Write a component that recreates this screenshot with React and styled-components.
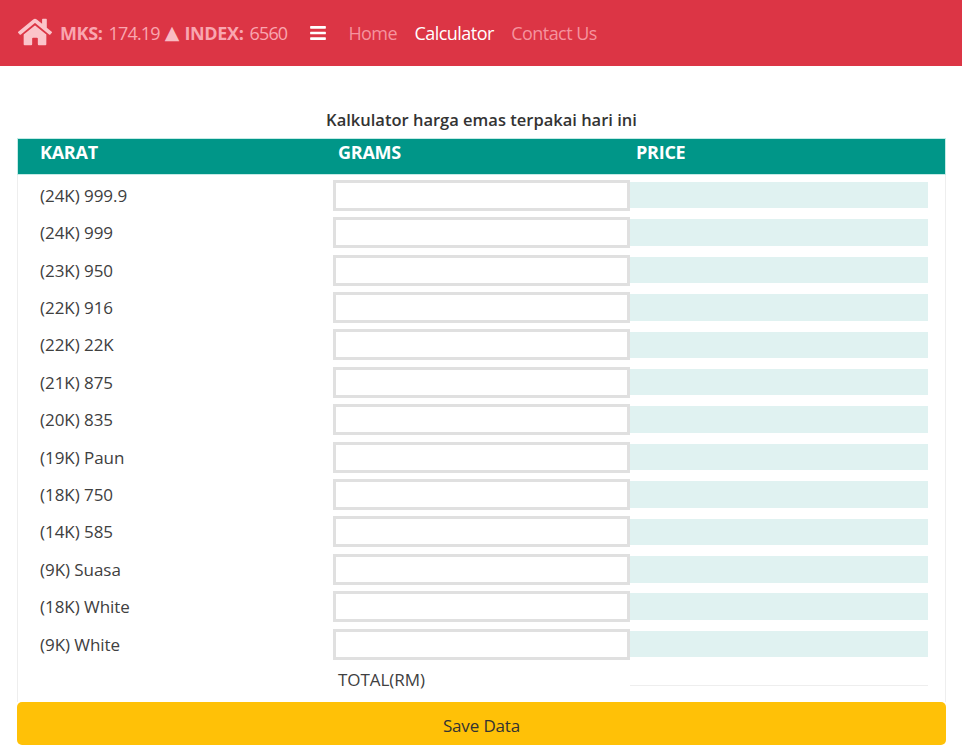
import React from "react";
import styled, { createGlobalStyle } from "styled-components";
import { FaHome, FaBars } from "react-icons/fa";

const GlobalStyle = createGlobalStyle`
    html, body { margin: 0; padding: 0; background: #fff; }
    body {
        font-family: "Open Sans", "Noto Sans", "Liberation Sans", sans-serif;
        color: #404040;
    }
`;

const NavBar = styled.nav`
    height: 66px;
    background-color: #dc3545;
    display: flex;
    align-items: center;
    padding-left: 18px;
    box-sizing: border-box;
`;

const Brand = styled.div`
    display: flex;
    align-items: center;
    color: #fbc4ca;
    font-size: 18px;
    white-space: nowrap;
    & svg { font-size: 34px; margin-right: 8px; margin-top: -3px; }
`;

const Ticker = styled.span`
    color: #f9a6b0;
    letter-spacing: -0.8px;
    & b { font-weight: 700; letter-spacing: -0.35px; margin-right: 2px; }
`;

const Arrow = styled.span`
    font-family: "DejaVu Sans", sans-serif;
    color: #f9bcc3;
    margin: -2px 5px 0;
    font-size: 19px;
`;

const MenuToggle = styled.span`
    display: flex;
    color: #fff;
    font-size: 18px;
    margin-left: 22px;
    margin-right: 21px;
`;

const NavLink = styled.a`
    color: ${(p) => (p.$active ? "#fff" : "#f5939e")};
    font-size: 18px;
    letter-spacing: -0.55px;
    margin-right: 17.5px;
`;

const Title = styled.h1`
    margin: 0;
    padding-top: 42px;
    height: 72px;
    box-sizing: border-box;
    text-align: center;
    font-size: 16.5px;
    line-height: 24px;
    font-weight: 600;
    color: #333;
`;

const Main = styled.main`
    margin: 0 16px 0 17px;
`;

const Table = styled.div`
    border: 1px solid #eeeeee;
    border-top: 0;
    border-bottom: 0;
    height: 564px;
    box-sizing: border-box;
`;

const Row = styled.div`
    display: grid;
    grid-template-columns: 298px 298px 298px;
    align-items: center;
    padding-left: 17px;
    height: 37.42px;
`;

const HeadRow = styled(Row)`
    background-color: #009688;
    color: #fff;
    font-weight: 700;
    font-size: 18px;
    letter-spacing: -0.25px;
    height: 37px;
    margin-bottom: 1.5px;
    margin-left: -1px;
    margin-right: -1px;
    padding-left: 18px;
    padding-bottom: 9px;
    box-sizing: border-box;
    box-shadow: 0 0 0 1px #c4ebe6 inset;
`;

const HeadCell = styled.div`
    padding-left: 5px;
`;

const Label = styled.div`
    padding-left: 5px;
    font-size: 17px;
    letter-spacing: -0.05px;
`;

const GramInput = styled.input`
    width: 297px;
    height: 31px;
    box-sizing: border-box;
    border: 3px solid #e0e0e0;
    background: #fff;
    outline: none;
    padding: 0 4px;
`;

const PriceField = styled.div`
    width: 298px;
    height: 26.5px;
    margin-left: -1px;
    background-color: #e0f2f1;
`;

const TotalRow = styled(Row)`
    height: 34px;
`;

const TotalLine = styled.div`
    align-self: start;
    width: 298px;
    height: 1px;
    margin-top: 22px;
    margin-left: -1px;
    background-color: #eeeeee;
`;

const SaveButton = styled.button`
    display: block;
    width: 100%;
    height: 43px;
    border: 0;
    border-radius: 5px;
    padding-top: 4px;
    background-color: #ffc107;
    color: #333;
    font-family: inherit;
    font-size: 17px;
    letter-spacing: -0.15px;
`;

const karats = [
    "(24K) 999.9",
    "(24K) 999",
    "(23K) 950",
    "(22K) 916",
    "(22K) 22K",
    "(21K) 875",
    "(20K) 835",
    "(19K) Paun",
    "(18K) 750",
    "(14K) 585",
    "(9K) Suasa",
    "(18K) White",
    "(9K) White",
];

export default function App() {
    return (
        <>
            <GlobalStyle />
            <NavBar>
                <Brand>
                    <FaHome />
                    <Ticker>
                        <b>MKS:</b> 174.19
                    </Ticker>
                    <Arrow>▲</Arrow>
                    <Ticker>
                        <b>INDEX:</b> 6560
                    </Ticker>
                </Brand>
                <MenuToggle>
                    <FaBars />
                </MenuToggle>
                <NavLink>Home</NavLink>
                <NavLink $active>Calculator</NavLink>
                <NavLink>Contact Us</NavLink>
            </NavBar>
            <Main>
                <Title>Kalkulator harga emas terpakai hari ini</Title>
                <Table>
                    <HeadRow>
                        <HeadCell>KARAT</HeadCell>
                        <HeadCell>GRAMS</HeadCell>
                        <HeadCell>PRICE</HeadCell>
                    </HeadRow>
                    {karats.map((k) => (
                        <Row key={k}>
                            <Label>{k}</Label>
                            <GramInput />
                            <PriceField />
                        </Row>
                    ))}
                    <TotalRow>
                        <div />
                        <Label>TOTAL(RM)</Label>
                        <TotalLine />
                    </TotalRow>
                </Table>
                <SaveButton>Save Data</SaveButton>
            </Main>
        </>
    );
}
